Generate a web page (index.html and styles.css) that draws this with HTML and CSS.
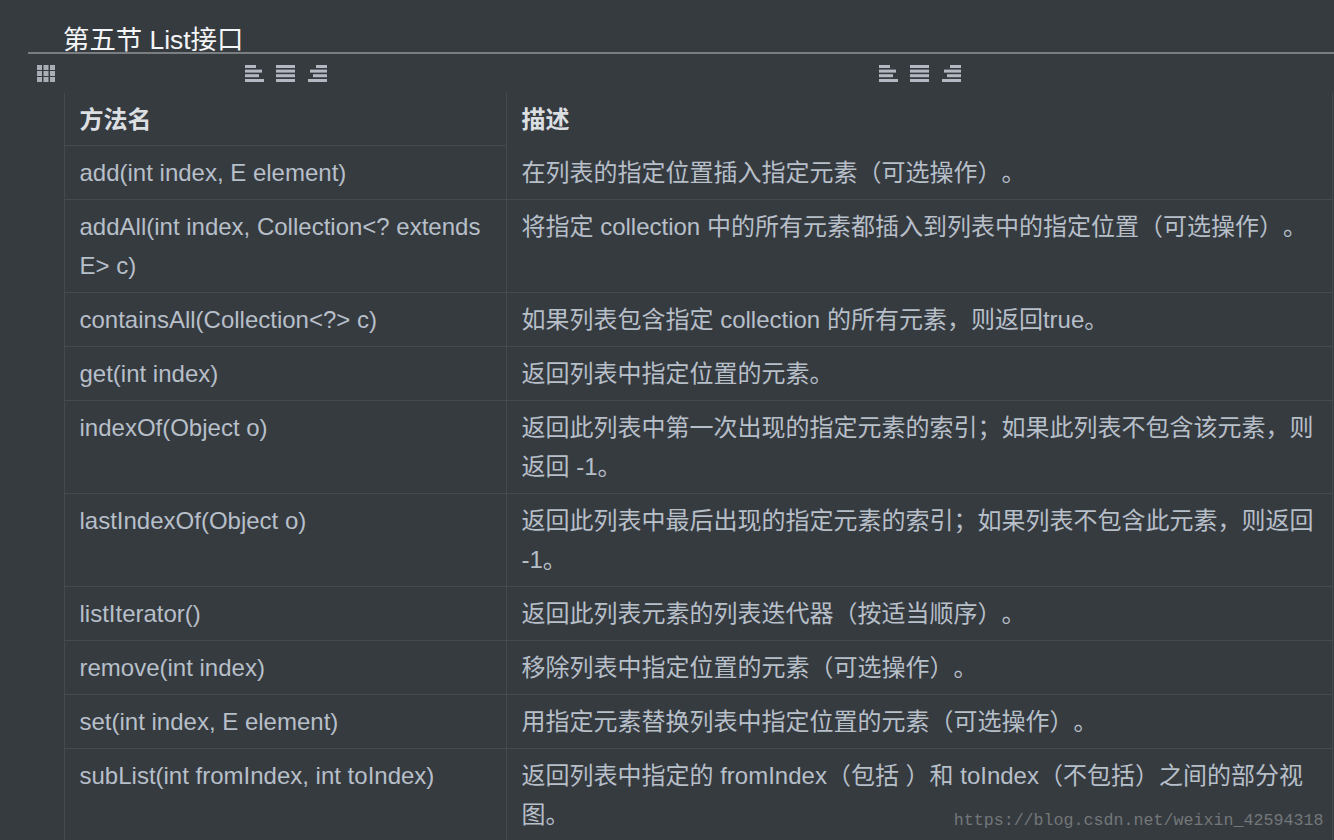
FILE: index.html
```html
<!DOCTYPE html>
<html lang="zh-CN">
<head>
<meta charset="utf-8">
<title>第五节 List接口</title>
<link rel="stylesheet" href="styles.css">
</head>
<body>
<main class="editor">
  <h2 class="heading">第五节 List接口</h2>
  <div class="toolbar">
    <svg class="grid-icon" width="18" height="17" viewBox="0 0 18 17"><g fill="#a9adb5"><rect x="0" y="0" width="5" height="5"/><rect x="6.5" y="0" width="5" height="5"/><rect x="13" y="0" width="5" height="5"/><rect x="0" y="6" width="5" height="5"/><rect x="6.5" y="6" width="5" height="5"/><rect x="13" y="6" width="5" height="5"/><rect x="0" y="12" width="5" height="5"/><rect x="6.5" y="12" width="5" height="5"/><rect x="13" y="12" width="5" height="5"/></g></svg>
    <div class="aligns aligns-left">
      <svg class="align" width="19" height="17" viewBox="0 0 19 17"><g fill="#b4b8c2"><rect x="0" y="0" width="11" height="3"/><rect x="0" y="4.6" width="17" height="3"/><rect x="0" y="9.2" width="14" height="3"/><rect x="0" y="14" width="19" height="3"/></g></svg>
      <svg class="align" width="19" height="17" viewBox="0 0 19 17"><g fill="#b4b8c2"><rect x="0" y="0" width="19" height="3"/><rect x="0" y="4.6" width="19" height="3"/><rect x="0" y="9.2" width="19" height="3"/><rect x="0" y="14" width="19" height="3"/></g></svg>
      <svg class="align" width="19" height="17" viewBox="0 0 19 17"><g fill="#b4b8c2"><rect x="8" y="0" width="11" height="3"/><rect x="2" y="4.6" width="17" height="3"/><rect x="5" y="9.2" width="14" height="3"/><rect x="0" y="14" width="19" height="3"/></g></svg>
    </div>
    <div class="aligns aligns-right">
      <svg class="align" width="19" height="17" viewBox="0 0 19 17"><g fill="#b4b8c2"><rect x="0" y="0" width="11" height="3"/><rect x="0" y="4.6" width="17" height="3"/><rect x="0" y="9.2" width="14" height="3"/><rect x="0" y="14" width="19" height="3"/></g></svg>
      <svg class="align" width="19" height="17" viewBox="0 0 19 17"><g fill="#b4b8c2"><rect x="0" y="0" width="19" height="3"/><rect x="0" y="4.6" width="19" height="3"/><rect x="0" y="9.2" width="19" height="3"/><rect x="0" y="14" width="19" height="3"/></g></svg>
      <svg class="align" width="19" height="17" viewBox="0 0 19 17"><g fill="#b4b8c2"><rect x="8" y="0" width="11" height="3"/><rect x="2" y="4.6" width="17" height="3"/><rect x="5" y="9.2" width="14" height="3"/><rect x="0" y="14" width="19" height="3"/></g></svg>
    </div>
  </div>
  <table class="methods">
    <thead>
      <tr><th class="col-name">方法名</th><th class="col-desc">描述</th></tr>
    </thead>
    <tbody>
      <tr><td>add(int index, E element)</td><td class="no-top">在列表的指定位置插入指定元素（可选操作）。</td></tr>
      <tr><td>addAll(int index, Collection&lt;? extends E&gt; c)</td><td>将指定 collection 中的所有元素都插入到列表中的指定位置（可选操作）。</td></tr>
      <tr><td>containsAll(Collection&lt;?&gt; c)</td><td>如果列表包含指定 collection 的所有元素，则返回true。</td></tr>
      <tr><td>get(int index)</td><td>返回列表中指定位置的元素。</td></tr>
      <tr><td>indexOf(Object o)</td><td>返回此列表中第一次出现的指定元素的索引；如果此列表不包含该元素，则返回 -1。</td></tr>
      <tr><td>lastIndexOf(Object o)</td><td>返回此列表中最后出现的指定元素的索引；如果列表不包含此元素，则返回 -1。</td></tr>
      <tr><td>listIterator()</td><td>返回此列表元素的列表迭代器（按适当顺序）。</td></tr>
      <tr><td>remove(int index)</td><td>移除列表中指定位置的元素（可选操作）。</td></tr>
      <tr><td>set(int index, E element)</td><td>用指定元素替换列表中指定位置的元素（可选操作）。</td></tr>
      <tr><td>subList(int fromIndex, int toIndex)</td><td>返回列表中指定的 fromIndex（包括 ）和 toIndex（不包括）之间的部分视图。</td></tr>
    </tbody>
  </table>
</main>
<div class="watermark">https://blog.csdn.net/weixin_42594318</div>
</body>
</html>
```

FILE: styles.css
```css
html, body {
  margin: 0;
  height: 100%;
  overflow: hidden;
  background: #363b40;
}
body {
  font-family: "Liberation Sans", "Noto Sans CJK SC", sans-serif;
  color: #b7bfc9;
  text-spacing-trim: space-all;
}
.editor {
  padding-left: 28px;
}
.heading {
  margin: 0;
  height: 52px;
  padding-left: 35px;
  font-size: 26.4px;
  font-weight: 400;
  line-height: 24px;
  display: flex;
  align-items: flex-end;
  color: #f4f5f6;
  border-bottom: 2px solid #7b7e80;
}
.toolbar {
  display: flex;
  align-items: flex-start;
  height: 39px;
  padding-top: 11px;
  box-sizing: border-box;
}
.grid-icon {
  margin-left: 9px;
}
.aligns {
  display: flex;
  gap: 12.5px;
}
.aligns-left {
  margin-left: 189.5px;
}
.aligns-right {
  margin-left: 552px;
}
.methods {
  margin-left: 36px;
  width: 1269px;
  table-layout: fixed;
  border-collapse: collapse;
  font-size: 24px;
  line-height: 39px;
}
.col-name {
  width: 442px;
}
th, td {
  box-sizing: border-box;
  padding: 7px 15px 7px 14.5px;
  text-align: left;
  vertical-align: top;
  border-left: 1px solid #454a4f;
  border-right: 1px solid #454a4f;
  border-top: 1px solid #454a4f;
}
th {
  border-top: 0;
  font-weight: 700;
  color: #dcdfe2;
  padding-bottom: 6px;
}
td.no-top {
  border-top: 0;
}
.watermark {
  position: absolute;
  right: 10.5px;
  top: 811px;
  font-family: "Liberation Mono", monospace;
  font-size: 16.67px;
  line-height: 20px;
  color: #737779;
}
```
